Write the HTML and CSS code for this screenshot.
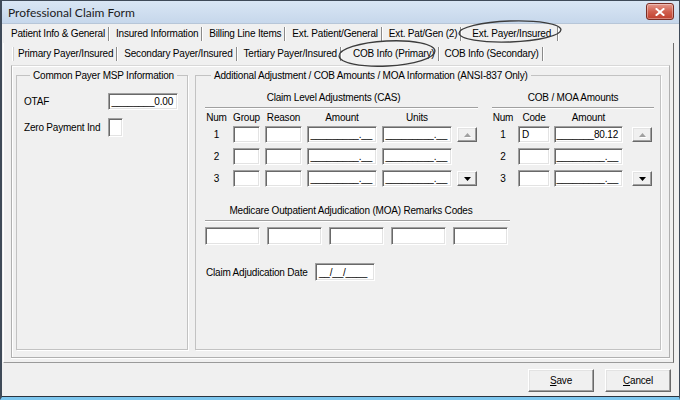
FILE: index.html
```html
<!DOCTYPE html>
<html lang="en">
<head>
<meta charset="utf-8">
<title>Professional Claim Form</title>
<link rel="stylesheet" href="styles.css">
</head>
<body>
<div class="window">
  <div class="titlebar">
    <span class="title">Professional Claim Form</span>
    <button class="close" aria-label="Close">
      <svg width="10" height="8" viewBox="0 0 10 8"><path d="M1.5 1 L8.5 7 M8.5 1 L1.5 7" stroke="#fff" stroke-width="2" stroke-linecap="square"/></svg>
    </button>
  </div>
  <div class="client">
    <div class="tabs tabs-main">
      <span class="tab">Patient Info &amp; General</span>
      <span class="tab">Insured Information</span>
      <span class="tab">Billing Line Items</span>
      <span class="tab">Ext. Patient/General</span>
      <span class="tab">Ext. Pat/Gen (2)</span>
      <span class="tab active">Ext. Payer/Insured</span>
    </div>
    <div class="page page-outer">
      <div class="tabs tabs-sub">
        <span class="tab first">Primary Payer/Insured</span>
        <span class="tab">Secondary Payer/Insured</span>
        <span class="tab">Tertiary Payer/Insured</span>
        <span class="tab active">COB Info (Primary)</span>
        <span class="tab after-active">COB Info (Secondary)</span>
      </div>
      <div class="page page-inner">
        <fieldset class="group group-msp">
          <legend>Common Payer MSP Information</legend>
          <div class="msp-grid">
            <span class="lbl">OTAF</span>
            <div class="field f-otaf mask">________0.00</div>
            <span class="lbl">Zero Payment Ind</span>
            <div class="field f-flag"></div>
          </div>
        </fieldset>
        <fieldset class="group group-adj">
          <legend>Additional Adjustment / COB Amounts / MOA Information (ANSI-837 Only)</legend>
          <div class="adj-top">
            <section class="cas">
              <div class="sec-title cas-title">Claim Level Adjustments (CAS)</div>
              <div class="etched"></div>
              <div class="cas-grid hdr-row">
                <span>Num</span><span>Group</span><span>Reason</span><span>Amount</span><span>Units</span><span></span>
              </div>
              <div class="cas-grid rows">
                <span class="num">1</span>
                <div class="field"></div>
                <div class="field"></div>
                <div class="field mask">_________.__</div>
                <div class="field mask">_________.__</div>
                <button class="spin up" aria-label="Up"><svg width="7" height="4" viewBox="0 0 7 4"><path d="M3.5 0 L7 4 L0 4Z" fill="#a0a0a0"/></svg></button>
                <span class="num">2</span>
                <div class="field"></div>
                <div class="field"></div>
                <div class="field mask">_________.__</div>
                <div class="field mask">_________.__</div>
                <span></span>
                <span class="num">3</span>
                <div class="field"></div>
                <div class="field"></div>
                <div class="field mask">_________.__</div>
                <div class="field mask">_________.__</div>
                <button class="spin down" aria-label="Down"><svg width="7" height="4" viewBox="0 0 7 4"><path d="M0 0 L7 0 L3.5 4Z" fill="#000"/></svg></button>
              </div>
            </section>
            <section class="cob">
              <div class="sec-title">COB / MOA Amounts</div>
              <div class="etched"></div>
              <div class="cob-grid hdr-row">
                <span>Num</span><span>Code</span><span>Amount</span><span></span>
              </div>
              <div class="cob-grid rows">
                <span class="num">1</span>
                <div class="field code">D</div>
                <div class="field mask">_______80.12</div>
                <button class="spin up" aria-label="Up"><svg width="7" height="4" viewBox="0 0 7 4"><path d="M3.5 0 L7 4 L0 4Z" fill="#a0a0a0"/></svg></button>
                <span class="num">2</span>
                <div class="field code"></div>
                <div class="field mask">_________.__</div>
                <span></span>
                <span class="num">3</span>
                <div class="field code"></div>
                <div class="field mask">_________.__</div>
                <button class="spin down" aria-label="Down"><svg width="7" height="4" viewBox="0 0 7 4"><path d="M0 0 L7 0 L3.5 4Z" fill="#000"/></svg></button>
              </div>
            </section>
          </div>
          <section class="moa">
            <div class="sec-title moa-title">Medicare Outpatient Adjudication (MOA) Remarks Codes</div>
            <div class="etched"></div>
            <div class="moa-codes">
              <div class="field"></div>
              <div class="field"></div>
              <div class="field"></div>
              <div class="field"></div>
              <div class="field"></div>
            </div>
          </section>
          <div class="date-row">
            <span class="lbl">Claim Adjudication Date</span>
            <div class="field f-date">__/__/____</div>
          </div>
        </fieldset>
      </div>
    </div>
    <div class="actions">
      <button class="btn"><u>S</u>ave</button>
      <button class="btn"><u>C</u>ancel</button>
    </div>
  </div>
  <svg class="marks" width="680" height="80" viewBox="0 0 680 80" aria-hidden="true">
    <ellipse cx="510" cy="31.5" rx="51" ry="10.5" transform="rotate(-2 510 31.5)" fill="none" stroke="#3c3c3c" stroke-width="1.3"/>
    <ellipse cx="387" cy="53.5" rx="48" ry="12.5" transform="rotate(-3 387 53.5)" fill="none" stroke="#3c3c3c" stroke-width="1.3"/>
  </svg>
</div>
</body>
</html>
```

FILE: styles.css
```css
* { box-sizing: border-box; margin: 0; padding: 0; }
html, body { width: 680px; height: 400px; overflow: hidden; }
body {
  background: #f0f0f0;
  font-family: "Liberation Sans", Arial, sans-serif;
  font-size: 10px;
  letter-spacing: -0.2px;
  line-height: 13px;
  color: #000;
}

.window {
  position: relative;
  width: 680px;
  height: 400px;
  display: flex;
  flex-direction: column;
  background: #f0f0f0;
  border: 1px solid #3f4a58;
  border-left-width: 2px;
  border-bottom: 3px solid #7cc6ee;
}

/* title bar */
.titlebar {
  height: 23px;
  flex: none;
  display: flex;
  align-items: center;
  padding-left: 6px;
  background: linear-gradient(#d9e6f4, #c6d7eb);
  border-bottom: 1px solid #b7c6d8;
}
.title {
  font-family: Lato, "Liberation Sans", Arial, sans-serif;
  font-size: 12px;
  letter-spacing: 0;
  color: #1b1b1b;
}
.close {
  margin-left: auto;
  margin-right: 5px;
  align-self: flex-start;
  margin-top: 2px;
  width: 28px;
  height: 17px;
  display: flex;
  align-items: center;
  justify-content: center;
  border: 1px solid #7a2d24;
  border-radius: 3px;
  background: linear-gradient(#e69b8f, #d0604f 50%, #c0402e);
  box-shadow: inset 0 0 0 1px rgba(255,255,255,0.35);
}

/* client area */
.client {
  flex: 1;
  display: flex;
  flex-direction: column;
  padding: 0 5px 0 1px;
  border-bottom: 1px solid #2b3541;
}

.tabs {
  display: flex;
  align-items: center;
  flex: none;
}
.tabs-main { height: 19px; padding-left: 1px; }
.tabs-sub { height: 22px; padding-left: 0; }
.tab {
  padding: 0 3px 0 7px;
  line-height: 14px;
  border-right: 1px solid #8a8a8a;
  box-shadow: 1px 0 0 #ffffff;
  white-space: nowrap;
}
.tab.active { padding: 0 6px 0 11px; }
.tabs-sub .tab.active { padding: 0 4px 0 12px; }
.tabs-sub .tab.after-active { padding-left: 5px; }
.tab.first { border-left: 1px solid #ffffff; box-shadow: 1px 0 0 #ffffff, inset 1px 0 0 #d0d0d0; padding-left: 5px; margin-left: 1px; }

.page-outer {
  height: 320px;
  flex: none;
  display: flex;
  flex-direction: column;
  padding-left: 7px;
  border-left: 1px solid #ffffff;
  border-right: 1px solid #6e6e6e;
  border-bottom: 1px solid #9a9a9a;
}
.page-inner {
  flex: 1;
  display: flex;
  gap: 7px;
  margin: 0 3px 4px 0;
  padding: 3px 8px 7px 4px;
  border: 1px solid #b0b0b0;
  border-top-color: #d8d8d8;
  box-shadow: inset 1px 1px 0 #ffffff, 0 1px 0 #ffffff;
}

/* group boxes */
.group {
  border: 1px solid #c2c2c2;
  box-shadow: 1px 1px 0 #ffffff;
  min-width: 0;
}
.group legend {
  margin-left: 6px;
  padding: 0 3px;
  line-height: 13px;
  white-space: nowrap;
}
.group-msp { width: 172px; flex: none; padding: 11px 6px 0 7px; }
.group-adj { flex: 1; padding: 9px 0 0 9px; }

.msp-grid {
  display: grid;
  grid-template-columns: 84px auto;
  row-gap: 8px;
  align-items: center;
}
.lbl { white-space: nowrap; }

/* fields */
.field {
  height: 17px;
  background: #ffffff;
  border: 1px solid;
  border-color: #a0a0a0 #ffffff #ffffff #a0a0a0;
  box-shadow: inset 1px 1px 0 #696969, inset -1px -1px 0 #e3e3e3;
  display: flex;
  align-items: center;
  overflow: hidden;
  white-space: nowrap;
  padding: 0 3px 0 2px;
  line-height: 13px;
}
.field.mask { justify-content: flex-end; padding-right: 4px; }
.f-otaf { width: 70px; }
.f-flag { width: 15px; height: 19px; }
.field.code { padding-left: 3px; }

/* adjustments */
.adj-top { display: flex; gap: 14px; }
.cas { width: 273px; }
.cob { width: 162px; }
.sec-title { text-align: center; white-space: nowrap; line-height: 13px; }
.cas-title { padding-right: 16px; }
.etched {
  height: 2px;
  border-top: 1px solid #a0a0a0;
  border-bottom: 1px solid #ffffff;
  margin: 3px 0 2px;
}
.hdr-row { margin-bottom: 2px; text-align: center; line-height: 13px; }
.cas-grid {
  display: grid;
  grid-template-columns: 23px 27px 37px 70px 70px 20px;
  column-gap: 5px;
}
.cob-grid {
  display: grid;
  grid-template-columns: 22px 32px 69px 25px;
  column-gap: 4px;
}
.rows { grid-auto-rows: 17px; row-gap: 5px; align-items: center; }
.num { text-align: center; }

.spin {
  width: 20px;
  height: 15px;
  justify-self: end;
  display: flex;
  align-items: center;
  justify-content: center;
  background: #f0f0f0;
  border: 1px solid;
  border-color: #ffffff #696969 #696969 #ffffff;
  box-shadow: inset -1px -1px 0 #a0a0a0, inset 1px 1px 0 #e3e3e3;
}
.spin.up svg { filter: drop-shadow(1px 1px 0 #ffffff); }

/* MOA */
.moa { width: 305px; margin-top: 17px; }
.moa-title { padding-right: 13px; }
.moa .etched { margin: 3px 0 5px; }
.moa-codes { display: flex; gap: 7px; }
.moa-codes .field { width: 55px; height: 18px; }

.date-row {
  display: flex;
  align-items: center;
  margin-top: 18px;
}
.date-row .lbl { width: 110px; padding-left: 1px; }
.f-date { width: 60px; height: 18px; padding-left: 3px; }

/* buttons */
.actions {
  display: flex;
  justify-content: flex-end;
  gap: 11px;
  padding: 6px 3px 0 0;
}
.btn {
  width: 66px;
  height: 23px;
  font: inherit;
  letter-spacing: inherit;
  color: #000;
  background: #f0f0f0;
  border: 1px solid;
  border-color: #ffffff #696969 #696969 #ffffff;
  box-shadow: inset -1px -1px 0 #a0a0a0, inset 1px 1px 0 #e3e3e3;
}

/* hand-drawn highlight marks over the tabs */
.marks {
  position: absolute;
  left: -2px;
  top: -1px;
  pointer-events: none;
}
```
